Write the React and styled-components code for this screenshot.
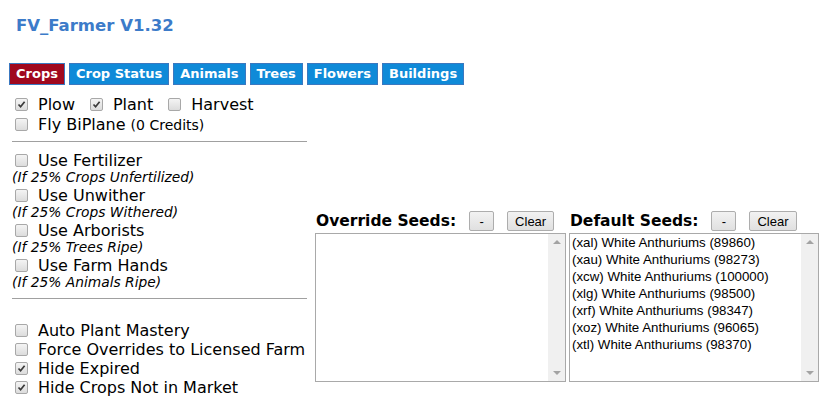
import React from 'react';
import styled, { createGlobalStyle } from 'styled-components';

const Global = createGlobalStyle`
  body {
    margin: 8px;
    background: #ffffff;
    font-family: "DejaVu Sans", Verdana, sans-serif;
    color: #000;
  }
`;

const Title = styled.h1`
  margin: 8px 0 0 8px;
  font-size: 16.5px;
  line-height: 20px;
  font-weight: bold;
  color: #3c7bc9;
`;

const Tabs = styled.div`
  display: flex;
  gap: 4px;
  margin: 27px 0 0 1px;
`;

const Tab = styled.div`
  height: 20px;
  line-height: 20px;
  padding: 0 6px;
  border: 1px solid #3a78c0;
  background: ${p => (p.$active ? '#a0081e' : '#0f8ad8')};
  color: #fff;
  font-size: 13px;
  font-weight: bold;
`;

const Content = styled.div`
  display: flex;
  align-items: flex-end;
  margin-top: 9px;
`;

const LeftCol = styled.div`
  width: 295px;
  padding: 0 8px 0 4px;
  flex-shrink: 0;
`;

const Row = styled.label`
  display: flex;
  align-items: center;
  gap: 8px;
  height: ${p => p.$h || 19}px;
  font-size: 16px;
  white-space: nowrap;
`;

const Item = styled.span`
  display: inline-flex;
  align-items: center;
  gap: 10px;
  margin-right: 4px;
`;

const Small = styled.span`
  font-size: 14px;
`;

const Box = styled.span`
  width: 11px;
  height: 11px;
  margin-left: 3px;
  border: 1px solid #a8a8a8;
  border-radius: 2px;
  background: linear-gradient(#f4f4f4, #dcdcdc);
  display: inline-flex;
  align-items: center;
  justify-content: center;
  flex-shrink: 0;
`;

const Note = styled.div`
  font-size: 13.8px;
  font-style: italic;
  line-height: 17px;
  height: 17px;
  white-space: nowrap;
`;

const Rule = styled.hr`
  border: none;
  border-top: 1px solid #a0a0a0;
  margin: ${p => p.$m};
`;

const Panels = styled.div`
  display: flex;
  gap: 3px;
  margin-bottom: 15px;
`;

const Panel = styled.div`
  width: ${p => p.$w}px;
  flex-shrink: 0;
`;

const PanelHead = styled.div`
  display: flex;
  align-items: center;
  height: 22px;
  padding-left: 1px;
  white-space: nowrap;
`;

const Heading = styled.span`
  font-size: 15.5px;
  font-weight: bold;
  margin-right: 13px;
  flex-shrink: 0;
`;

const Btn = styled.button`
  height: 20px;
  padding: 0 7px;
  margin-right: 13px;
  border: 1px solid #adadad;
  border-radius: 2px;
  background: linear-gradient(#f2f2f2, #e0e0e0);
  font-family: "Liberation Sans", Arial, sans-serif;
  font-size: 13px;
  color: #000;
  flex-shrink: 0;
  min-width: ${p => p.$min || 0}px;
`;

const ListBox = styled.div`
  display: flex;
  height: 147px;
  border: 1px solid #a9a9a9;
  margin-top: 1px;
`;

const Options = styled.div`
  flex: 1;
  padding: 0 2px;
  font-family: "Liberation Sans", Arial, sans-serif;
  font-size: 13.3px;
  line-height: 17px;
  color: #000;
`;

const Track = styled.div`
  width: 17px;
  background: #f0f0f0;
  display: flex;
  flex-direction: column;
  justify-content: space-between;
  align-items: center;
  padding: 6px 0;
`;

const Arrow = styled.span`
  width: 0;
  height: 0;
  border-left: 4px solid transparent;
  border-right: 4px solid transparent;
  ${p => (p.$down ? 'border-top: 4px solid #a3a3a3;' : 'border-bottom: 4px solid #a3a3a3;')}
`;

const Check = ({ on }) => (
  <Box>
    {on && (
      <svg width="9" height="9" viewBox="0 0 9 9">
        <path d="M1.5 4.5 L3.6 6.8 L7.6 1.8" fill="none" stroke="#3a3a3a" strokeWidth="1.7" />
      </svg>
    )}
  </Box>
);

const seeds = [
  '(xal) White Anthuriums (89860)',
  '(xau) White Anthuriums (98273)',
  '(xcw) White Anthuriums (100000)',
  '(xlg) White Anthuriums (98500)',
  '(xrf) White Anthuriums (98347)',
  '(xoz) White Anthuriums (96065)',
  '(xtl) White Anthuriums (98370)',
];

const tabs = ['Crops', 'Crop Status', 'Animals', 'Trees', 'Flowers', 'Buildings'];

const SeedPanel = ({ title, width, items }) => (
  <Panel $w={width}>
    <PanelHead>
      <Heading>{title}</Heading>
      <Btn $min={25}>-</Btn>
      <Btn>Clear</Btn>
    </PanelHead>
    <ListBox>
      <Options>
        {items.map(s => (
          <div key={s}>{s}</div>
        ))}
      </Options>
      <Track>
        <Arrow />
        <Arrow $down />
      </Track>
    </ListBox>
  </Panel>
);

export default function App() {
  return (
    <>
      <Global />
      <Title>FV_Farmer V1.32</Title>
      <Tabs>
        {tabs.map((t, i) => (
          <Tab key={t} $active={i === 0}>{t}</Tab>
        ))}
      </Tabs>
      <Content>
        <LeftCol>
          <Row $h={20}>
            <Item><Check on />Plow</Item>
            <Item><Check on />Plant</Item>
            <Item><Check />Harvest</Item>
          </Row>
          <Row $h={20}>
            <Item><Check /><span>Fly BiPlane <Small>(0 Credits)</Small></span></Item>
          </Row>
          <Rule $m="7px 0 9px 0" />
          <Row $h={18}><Item><Check />Use Fertilizer</Item></Row>
          <Note>(If 25% Crops Unfertilized)</Note>
          <Row $h={18}><Item><Check />Use Unwither</Item></Row>
          <Note>(If 25% Crops Withered)</Note>
          <Row $h={18}><Item><Check />Use Arborists</Item></Row>
          <Note>(If 25% Trees Ripe)</Note>
          <Row $h={18}><Item><Check />Use Farm Hands</Item></Row>
          <Note>(If 25% Animals Ripe)</Note>
          <Rule $m="7px 0 22px 0" />
          <Row><Item><Check />Auto Plant Mastery</Item></Row>
          <Row><Item><Check />Force Overrides to Licensed Farm</Item></Row>
          <Row><Item><Check on />Hide Expired</Item></Row>
          <Row><Item><Check on />Hide Crops Not in Market</Item></Row>
        </LeftCol>
        <Panels>
          <SeedPanel title="Override Seeds:" width={251} items={[]} />
          <SeedPanel title="Default Seeds:" width={250} items={seeds} />
        </Panels>
      </Content>
    </>
  );
}
